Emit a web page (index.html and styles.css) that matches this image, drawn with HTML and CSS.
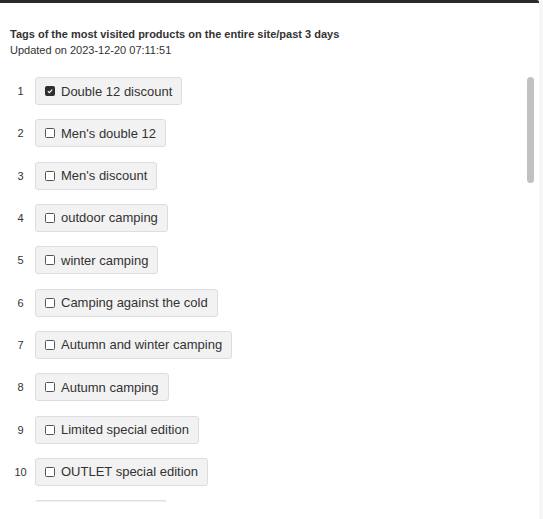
FILE: index.html
```html
<!DOCTYPE html>
<html lang="en">
<head>
<meta charset="utf-8">
<title>Tags</title>
<link rel="stylesheet" href="styles.css">
</head>
<body>
<div class="frame">
  <header class="head">
    <div class="title">Tags of the most visited products on the entire site/past 3 days</div>
    <div class="updated">Updated on 2023-12-20 07:11:51</div>
  </header>
  <div class="scroller">
    <div class="list">
      <div class="row"><span class="num">1</span><label class="tag"><span class="box checked"><svg viewBox="0 0 10 10" width="10" height="10"><path d="M2.3 5.2 L4.2 7 L7.8 3.2" fill="none" stroke="#fff" stroke-width="1.5"/></svg></span>Double 12 discount</label></div>
      <div class="row"><span class="num">2</span><label class="tag"><span class="box"></span>Men's double 12</label></div>
      <div class="row"><span class="num">3</span><label class="tag"><span class="box"></span>Men's discount</label></div>
      <div class="row"><span class="num">4</span><label class="tag"><span class="box"></span>outdoor camping</label></div>
      <div class="row"><span class="num">5</span><label class="tag"><span class="box"></span>winter camping</label></div>
      <div class="row"><span class="num">6</span><label class="tag"><span class="box"></span>Camping against the cold</label></div>
      <div class="row"><span class="num">7</span><label class="tag"><span class="box"></span>Autumn and winter camping</label></div>
      <div class="row"><span class="num">8</span><label class="tag"><span class="box"></span>Autumn camping</label></div>
      <div class="row"><span class="num">9</span><label class="tag"><span class="box"></span>Limited special edition</label></div>
      <div class="row"><span class="num">10</span><label class="tag"><span class="box"></span>OUTLET special edition</label></div>
      <div class="row"><span class="num"></span><span class="tag tag-next"></span></div>
    </div>
    <div class="thumb"></div>
  </div>
</div>
</body>
</html>
```
FILE: styles.css
```css
html, body {
  margin: 0;
  padding: 0;
}
body {
  background: #f6f6f6;
  font-family: "Liberation Sans", Arial, sans-serif;
  color: #333;
}
.frame {
  width: 539px;
  height: 516px;
  background: #fff;
  border-top: 3px solid #2a2a2a;
  border-top-right-radius: 2px;
  overflow: hidden;
}
.head {
  padding: 23px 0 0 10px;
  font-size: 11px;
  line-height: 16px;
  color: #333;
}
.title {
  font-weight: bold;
}
.scroller {
  position: relative;
  margin-top: 19px;
  height: 425px;
  overflow: hidden;
}
.list {
  display: flex;
  flex-direction: column;
  gap: 14.33px;
}
.thumb {
  position: absolute;
  top: 0;
  left: 527px;
  width: 7px;
  height: 106px;
  border-radius: 4px;
  background: #c1c1c1;
}
.row {
  display: flex;
  align-items: center;
  height: 28px;
  flex: none;
}
.num {
  width: 29px;
  margin-left: 6px;
  text-align: center;
  font-size: 11px;
}
.tag {
  display: flex;
  align-items: center;
  height: 26px;
  padding: 0 9px;
  border: 1px solid #dcdce2;
  border-radius: 3px;
  background: #f2f2f2;
  font-size: 13px;
  color: #333;
}
.tag-next {
  width: 112px;
}
.box {
  width: 8px;
  height: 8px;
  border: 1px solid #555;
  border-radius: 1.5px;
  margin-right: 6px;
  display: flex;
  background: #fff;
}
.box.checked {
  background: #2e2e2e;
  border-color: #2e2e2e;
}
.box svg {
  width: 8px;
  height: 8px;
}
```
